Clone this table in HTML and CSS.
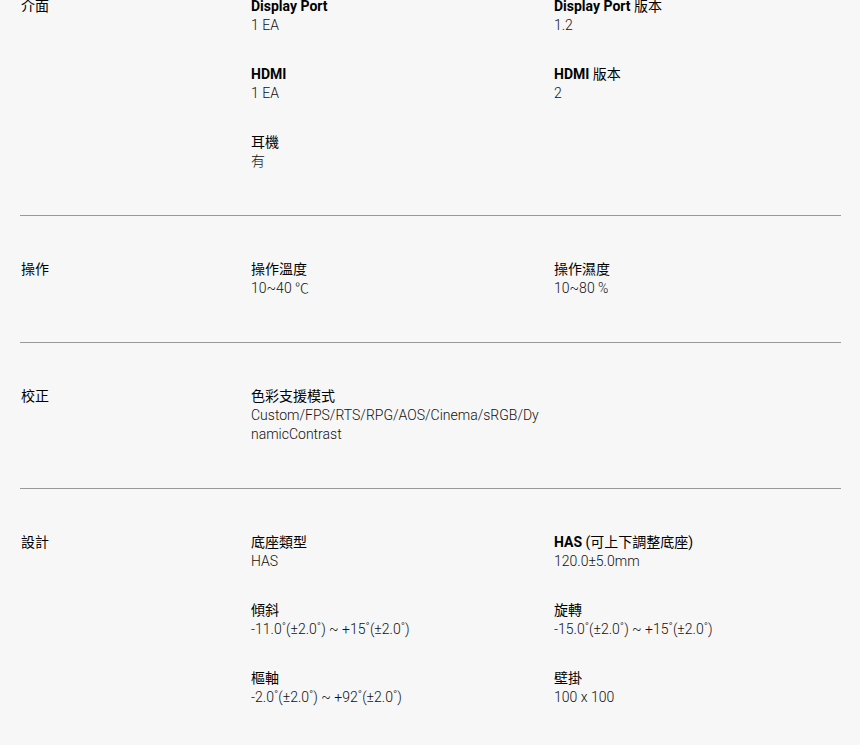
FILE: index.html
```html
<!DOCTYPE html>
<html lang="zh-Hant">
<head>
    <meta charset="UTF-8">
    <meta name="viewport" content="width=device-width, initial-scale=1.0">
    <title>規格</title>
    <link rel="stylesheet" href="styles.css">
</head>
<body>
    <div class="spec-list">
        <section class="spec-group">
            <h3 class="group-title">介面</h3>
            <ul class="spec-items">
                <li class="spec-item"><p class="spec-name"><b>Display Port</b></p><p class="spec-value">1 EA</p></li>
                <li class="spec-item"><p class="spec-name"><b>Display Port</b> 版本</p><p class="spec-value">1.2</p></li>
                <li class="spec-item"><p class="spec-name"><b>HDMI</b></p><p class="spec-value">1 EA</p></li>
                <li class="spec-item"><p class="spec-name"><b>HDMI</b> 版本</p><p class="spec-value">2</p></li>
                <li class="spec-item"><p class="spec-name">耳機</p><p class="spec-value">有</p></li>
            </ul>
        </section>

        <section class="spec-group">
            <h3 class="group-title">操作</h3>
            <ul class="spec-items">
                <li class="spec-item"><p class="spec-name">操作溫度</p><p class="spec-value">10~40 ℃</p></li>
                <li class="spec-item"><p class="spec-name">操作濕度</p><p class="spec-value">10~80 %</p></li>
            </ul>
        </section>

        <section class="spec-group">
            <h3 class="group-title">校正</h3>
            <ul class="spec-items">
                <li class="spec-item"><p class="spec-name">色彩支援模式</p><p class="spec-value">Custom/FPS/RTS/RPG/AOS/Cinema/sRGB/DynamicContrast</p></li>
            </ul>
        </section>

        <section class="spec-group">
            <h3 class="group-title">設計</h3>
            <ul class="spec-items">
                <li class="spec-item"><p class="spec-name">底座類型</p><p class="spec-value">HAS</p></li>
                <li class="spec-item"><p class="spec-name"><b>HAS</b> (可上下調整底座)</p><p class="spec-value">120.0±5.0mm</p></li>
                <li class="spec-item"><p class="spec-name">傾斜</p><p class="spec-value">-11.0˚(±2.0˚) ~ +15˚(±2.0˚)</p></li>
                <li class="spec-item"><p class="spec-name">旋轉</p><p class="spec-value">-15.0˚(±2.0˚) ~ +15˚(±2.0˚)</p></li>
                <li class="spec-item"><p class="spec-name">樞軸</p><p class="spec-value">-2.0˚(±2.0˚) ~ +92˚(±2.0˚)</p></li>
                <li class="spec-item"><p class="spec-name">壁掛</p><p class="spec-value">100 x 100</p></li>
            </ul>
        </section>
    </div>
</body>
</html>
```

FILE: styles.css
```css
body {
    margin: 0;
    padding: 0;
    background-color: #f7f7f7;
    font-family: Roboto, "Noto Sans CJK TC", sans-serif;
    font-size: 14px;
    line-height: 20px;
    color: #000000;
}
.spec-list {
    margin: -47px 19px 0 20px;
}
.spec-group {
    display: grid;
    grid-template-columns: 231px 1fr;
    padding: 43px 0 44px;
    border-bottom: 1px solid #999999;
}
.group-title {
    margin: 0;
    padding-left: 1px;
    font-size: 14px;
    font-weight: 400;
}
.spec-items {
    list-style: none;
    margin: 0;
    padding: 0;
    display: grid;
    grid-template-columns: 303px 1fr;
    row-gap: 29px;
}
.spec-item {
    padding-right: 10px;
}
.spec-item p {
    margin: 0;
}
.spec-name {
    font-weight: 400;
}
.spec-name b {
    font-weight: 700;
}
.spec-value {
    font-weight: 300;
    line-height: 19px;
    color: #111111;
    word-break: break-all;
}
```
